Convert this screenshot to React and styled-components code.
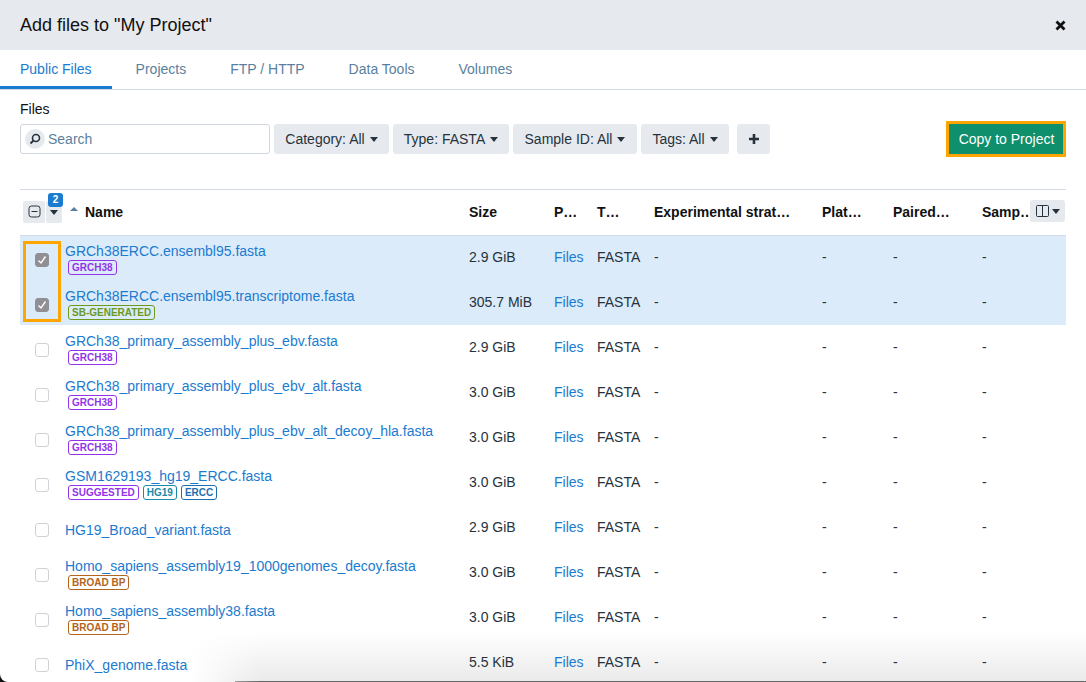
import React from 'react';
import styled, { createGlobalStyle } from 'styled-components';

const Global = createGlobalStyle`
    html, body { margin: 0; padding: 0; background: #111; }
    body { font-family: "Liberation Sans", Arial, sans-serif; }
    * { box-sizing: border-box; }
`

const Dialog = styled.div`
    position: relative;
    width: 1086px;
    height: 682px;
    overflow: hidden;
    background: #fff;
    border-radius: 0 0 2px 8px;
`
const Header = styled.div`
    height: 50px;
    background: #e6eaee;
    display: flex;
    align-items: center;
    justify-content: space-between;
    padding: 0 20px;
`
const Title = styled.h1`
    margin: 0;
    font-size: 18px;
    font-weight: 400;
    color: #111;
`
const Tabs = styled.div`
    display: flex;
    height: 40px;
    border-bottom: 1px solid #d3dce6;
`
const Tab = styled.div`
    height: 39px;
    padding: 1px 20px 0;
    margin-right: 4px;
    display: flex;
    align-items: center;
    font-size: 14px;
    color: ${p => (p.$active ? '#1a7bd0' : '#5b7f9e')};
    border-bottom: 3px solid ${p => (p.$active ? '#1a7bd0' : 'transparent')};
`
const Body = styled.div`
    position: relative;
    z-index: 1;
    padding: 0 20px;
`
const FilesLabel = styled.div`
    font-size: 14px;
    color: #111;
    padding-top: 11px;
    height: 32px;
`
const Toolbar = styled.div`
    display: flex;
    align-items: center;
    height: 36px;
    margin-top: -1px;
    gap: 4px;
`
const SearchBox = styled.div`
    width: 250px;
    height: 30px;
    border: 1px solid #cfd6dd;
    border-radius: 3px;
    display: flex;
    align-items: center;
    padding-left: 4px;
    gap: 3px;
    font-size: 14px;
    color: #5b7f9e;
`
const SearchIcon = styled.span`
    width: 20px;
    height: 20px;
    border-radius: 50%;
    background: #e6eaee;
    display: flex;
    align-items: center;
    justify-content: center;
`
const FilterButton = styled.div`
    height: 30px;
    width: ${p => p.$w}px;
    background: #e6eaee;
    border-radius: 3px;
    display: flex;
    align-items: center;
    justify-content: center;
    gap: 5px;
    font-size: 14px;
    color: #26323d;
`
const Caret = styled.span`
    display: inline-block;
    width: 0;
    height: 0;
    border-left: 4.5px solid transparent;
    border-right: 4.5px solid transparent;
    border-top: 5px solid #26323d;
`
const AddButton = styled(FilterButton)`
    margin-left: 4px;
`
const CopyButton = styled.div`
    margin-left: auto;
    height: 36px;
    width: 120px;
    padding-left: 1px;
    background: #0f8f6b;
    border: 3px solid #ffa500;
    color: #fff;
    font-size: 14px;
    display: flex;
    align-items: center;
    justify-content: center;
`
const Table = styled.div`
    margin-top: 32px;
    border-top: 1px solid #d3dce6;
`
const columns = '45px 404px 85px 43px 57px 168px 71px 89px 84px';
const HeadRow = styled.div`
    position: relative;
    display: grid;
    grid-template-columns: ${columns};
    height: 46px;
    align-items: center;
    border-bottom: 1px solid #d3dce6;
`
const HeadCell = styled.div`
    font-size: 14px;
    font-weight: 700;
    color: #111;
    white-space: nowrap;
    display: flex;
    align-items: center;
    gap: 7px;
    padding-bottom: 2px;
`
const SelectGroup = styled.div`
    display: flex;
    gap: 1px;
    position: relative;
    width: fit-content;
    margin: 0 0 2px 3px;
`
const SelectPart = styled.div`
    height: 22px;
    width: ${p => p.$w}px;
    background: #e6eaee;
    border-radius: 2px;
    display: flex;
    align-items: center;
    justify-content: center;
    padding-top: ${p => p.$drop || 0}px;
`
const CountBadge = styled.div`
    position: absolute;
    top: -8px;
    right: -1px;
    width: 15px;
    height: 14px;
    border-radius: 3px;
    background: #1a7bd0;
    color: #fff;
    font-size: 10px;
    font-weight: 700;
    display: flex;
    align-items: center;
    justify-content: center;
`
const SortArrow = styled.span`
    display: inline-block;
    width: 0;
    height: 0;
    margin-left: 5px;
    margin-bottom: 5px;
    border-left: 4px solid transparent;
    border-right: 4px solid transparent;
    border-bottom: 4px solid #5b7f9e;
`
const ColumnsButton = styled.div`
    position: absolute;
    right: 1px;
    top: 10px;
    width: 35px;
    height: 22px;
    background: #e6eaee;
    border-radius: 3px;
    display: flex;
    align-items: center;
    justify-content: center;
    gap: 3px;
`
const RowList = styled.div`
    position: relative;
`
const Row = styled.div`
    display: grid;
    grid-template-columns: ${columns};
    height: 45px;
    align-items: center;
    background: ${p => (p.$selected ? '#dcebf9' : 'transparent')};
    font-size: 14px;
    color: #26323d;

    &:nth-child(3) {
        box-shadow: 0 -1px 0 #fff;
    }
`
const Cell = styled.div`
    padding-bottom: 3px;
`
const LinkCell = styled(Cell)`
    color: #1a7bd0;
`
const CheckCell = styled.div`
    display: flex;
    padding-left: 15px;
    padding-top: 2px;
`
const Checkbox = styled.div`
    width: 14px;
    height: 14px;
    border-radius: 3px;
    border: 1px solid ${p => (p.$checked ? '#8f8f94' : '#cfd2d6')};
    background: ${p => (p.$checked ? '#8f8f94' : '#fff')};
    display: flex;
    align-items: center;
    justify-content: center;
`
const NameCell = styled.div`
    display: flex;
    flex-direction: column;
    gap: 1px;
    padding-top: ${p => (p.$plain ? 2 : 0)}px;
`
const FileLink = styled.a`
    color: #1a7bd0;
    font-size: 14px;
    line-height: 16px;
    white-space: nowrap;
`
const Tags = styled.div`
    display: flex;
    gap: 4px;
    margin-left: 3px;
`
const Tag = styled.span`
    font-size: 10px;
    font-weight: 700;
    line-height: 11px;
    padding: 1px 3px;
    border: 1px solid ${p => p.$color};
    border-radius: 3px;
    color: ${p => p.$color};
`
const SelectionFrame = styled.div`
    position: absolute;
    left: 3px;
    top: 5px;
    width: 38px;
    height: 81px;
    border: 3px solid #ffa500;
    pointer-events: none;
`
const BottomFade = styled.div`
    position: absolute;
    left: 190px;
    right: 0;
    bottom: 0;
    height: 50px;
    background: linear-gradient(to bottom, rgba(235, 235, 235, 0), rgba(232, 232, 232, 0.9));
    mask-image: linear-gradient(to right, transparent, #000 70px);
    pointer-events: none;

    &::after {
        content: '';
        position: absolute;
        left: 45px;
        right: 0;
        bottom: 0;
        height: 1px;
        background: #666;
    }
`

const purple = '#9333ea';
const broad = '#b3641e';

const files = [
    { name: 'GRCh38ERCC.ensembl95.fasta', size: '2.9 GiB', selected: true, tags: [['GRCH38', purple]] },
    { name: 'GRCh38ERCC.ensembl95.transcriptome.fasta', size: '305.7 MiB', selected: true, tags: [['SB-GENERATED', '#6b9a1f']] },
    { name: 'GRCh38_primary_assembly_plus_ebv.fasta', size: '2.9 GiB', tags: [['GRCH38', purple]] },
    { name: 'GRCh38_primary_assembly_plus_ebv_alt.fasta', size: '3.0 GiB', tags: [['GRCH38', purple]] },
    { name: 'GRCh38_primary_assembly_plus_ebv_alt_decoy_hla.fasta', size: '3.0 GiB', tags: [['GRCH38', purple]] },
    { name: 'GSM1629193_hg19_ERCC.fasta', size: '3.0 GiB', tags: [['SUGGESTED', purple], ['HG19', '#1a8aa8'], ['ERCC', '#1f6fb0']] },
    { name: 'HG19_Broad_variant.fasta', size: '2.9 GiB', tags: [] },
    { name: 'Homo_sapiens_assembly19_1000genomes_decoy.fasta', size: '3.0 GiB', tags: [['BROAD BP', broad]] },
    { name: 'Homo_sapiens_assembly38.fasta', size: '3.0 GiB', tags: [['BROAD BP', broad]] },
    { name: 'PhiX_genome.fasta', size: '5.5 KiB', tags: [] },
];

function App() {
    return (
        <Dialog>
            <Global />
            <BottomFade />
            <Header>
                <Title>Add files to "My Project"</Title>
                <svg width="11" height="11" viewBox="0 0 11 11">
                    <path d="M1.5 1.5l8 8M9.5 1.5l-8 8" stroke="#111" strokeWidth="2.8" />
                </svg>
            </Header>
            <Tabs>
                <Tab $active>Public Files</Tab>
                <Tab>Projects</Tab>
                <Tab>FTP / HTTP</Tab>
                <Tab>Data Tools</Tab>
                <Tab>Volumes</Tab>
            </Tabs>
            <Body>
                <FilesLabel>Files</FilesLabel>
                <Toolbar>
                    <SearchBox>
                        <SearchIcon>
                            <svg width="12" height="12" viewBox="0 0 12 12" fill="none">
                                <circle cx="7" cy="5" r="3.5" stroke="#26323d" strokeWidth="1.6" />
                                <path d="M4.5 7.5L1.5 10.5" stroke="#26323d" strokeWidth="1.8" />
                            </svg>
                        </SearchIcon>
                        Search
                    </SearchBox>
                    <FilterButton $w={115}>Category: All <Caret /></FilterButton>
                    <FilterButton $w={116}>Type: FASTA <Caret /></FilterButton>
                    <FilterButton $w={124}>Sample ID: All <Caret /></FilterButton>
                    <FilterButton $w={88}>Tags: All <Caret /></FilterButton>
                    <AddButton $w={33}>
                        <svg width="12" height="12" viewBox="0 0 12 12">
                            <path d="M6 1v10M1 6h10" stroke="#26323d" strokeWidth="2.6" />
                        </svg>
                    </AddButton>
                    <CopyButton>Copy to Project</CopyButton>
                </Toolbar>
                <Table>
                    <HeadRow>
                        <SelectGroup>
                            <SelectPart $w={22}>
                                <svg width="13" height="13" viewBox="0 0 13 13" fill="none">
                                    <rect x="1" y="1" width="11" height="11" rx="2.5" stroke="#26323d" />
                                    <path d="M3.5 6.5h6" stroke="#26323d" />
                                </svg>
                            </SelectPart>
                            <SelectPart $w={16} $drop={2}><Caret /></SelectPart>
                            <CountBadge>2</CountBadge>
                        </SelectGroup>
                        <HeadCell><SortArrow />Name</HeadCell>
                        <HeadCell>Size</HeadCell>
                        <HeadCell>P…</HeadCell>
                        <HeadCell>T…</HeadCell>
                        <HeadCell>Experimental strat…</HeadCell>
                        <HeadCell>Plat…</HeadCell>
                        <HeadCell>Paired…</HeadCell>
                        <HeadCell>Samp…</HeadCell>
                        <ColumnsButton>
                            <svg width="13" height="12" viewBox="0 0 13 12" fill="none">
                                <rect x="0.5" y="0.5" width="12" height="11" rx="1" stroke="#26323d" />
                                <path d="M6.5 0.5v11" stroke="#26323d" />
                            </svg>
                            <Caret />
                        </ColumnsButton>
                    </HeadRow>
                    <RowList>
                        {files.map(file => (
                            <Row key={file.name} $selected={file.selected}>
                                <CheckCell>
                                    <Checkbox $checked={file.selected}>
                                        {file.selected && (
                                            <svg width="10" height="10" viewBox="0 0 10 10" fill="none">
                                                <path d="M1.5 5.5l2.5 2.5 4.5-6.5" stroke="#fff" strokeWidth="1.4" />
                                            </svg>
                                        )}
                                    </Checkbox>
                                </CheckCell>
                                <NameCell $plain={file.tags.length === 0}>
                                    <FileLink>{file.name}</FileLink>
                                    {file.tags.length > 0 && (
                                        <Tags>
                                            {file.tags.map(([label, color]) => (
                                                <Tag key={label} $color={color}>{label}</Tag>
                                            ))}
                                        </Tags>
                                    )}
                                </NameCell>
                                <Cell>{file.size}</Cell>
                                <LinkCell>Files</LinkCell>
                                <Cell>FASTA</Cell>
                                <Cell>-</Cell>
                                <Cell>-</Cell>
                                <Cell>-</Cell>
                                <Cell>-</Cell>
                            </Row>
                        ))}
                        <SelectionFrame />
                    </RowList>
                </Table>
            </Body>
        </Dialog>
    );
}

export default App;
